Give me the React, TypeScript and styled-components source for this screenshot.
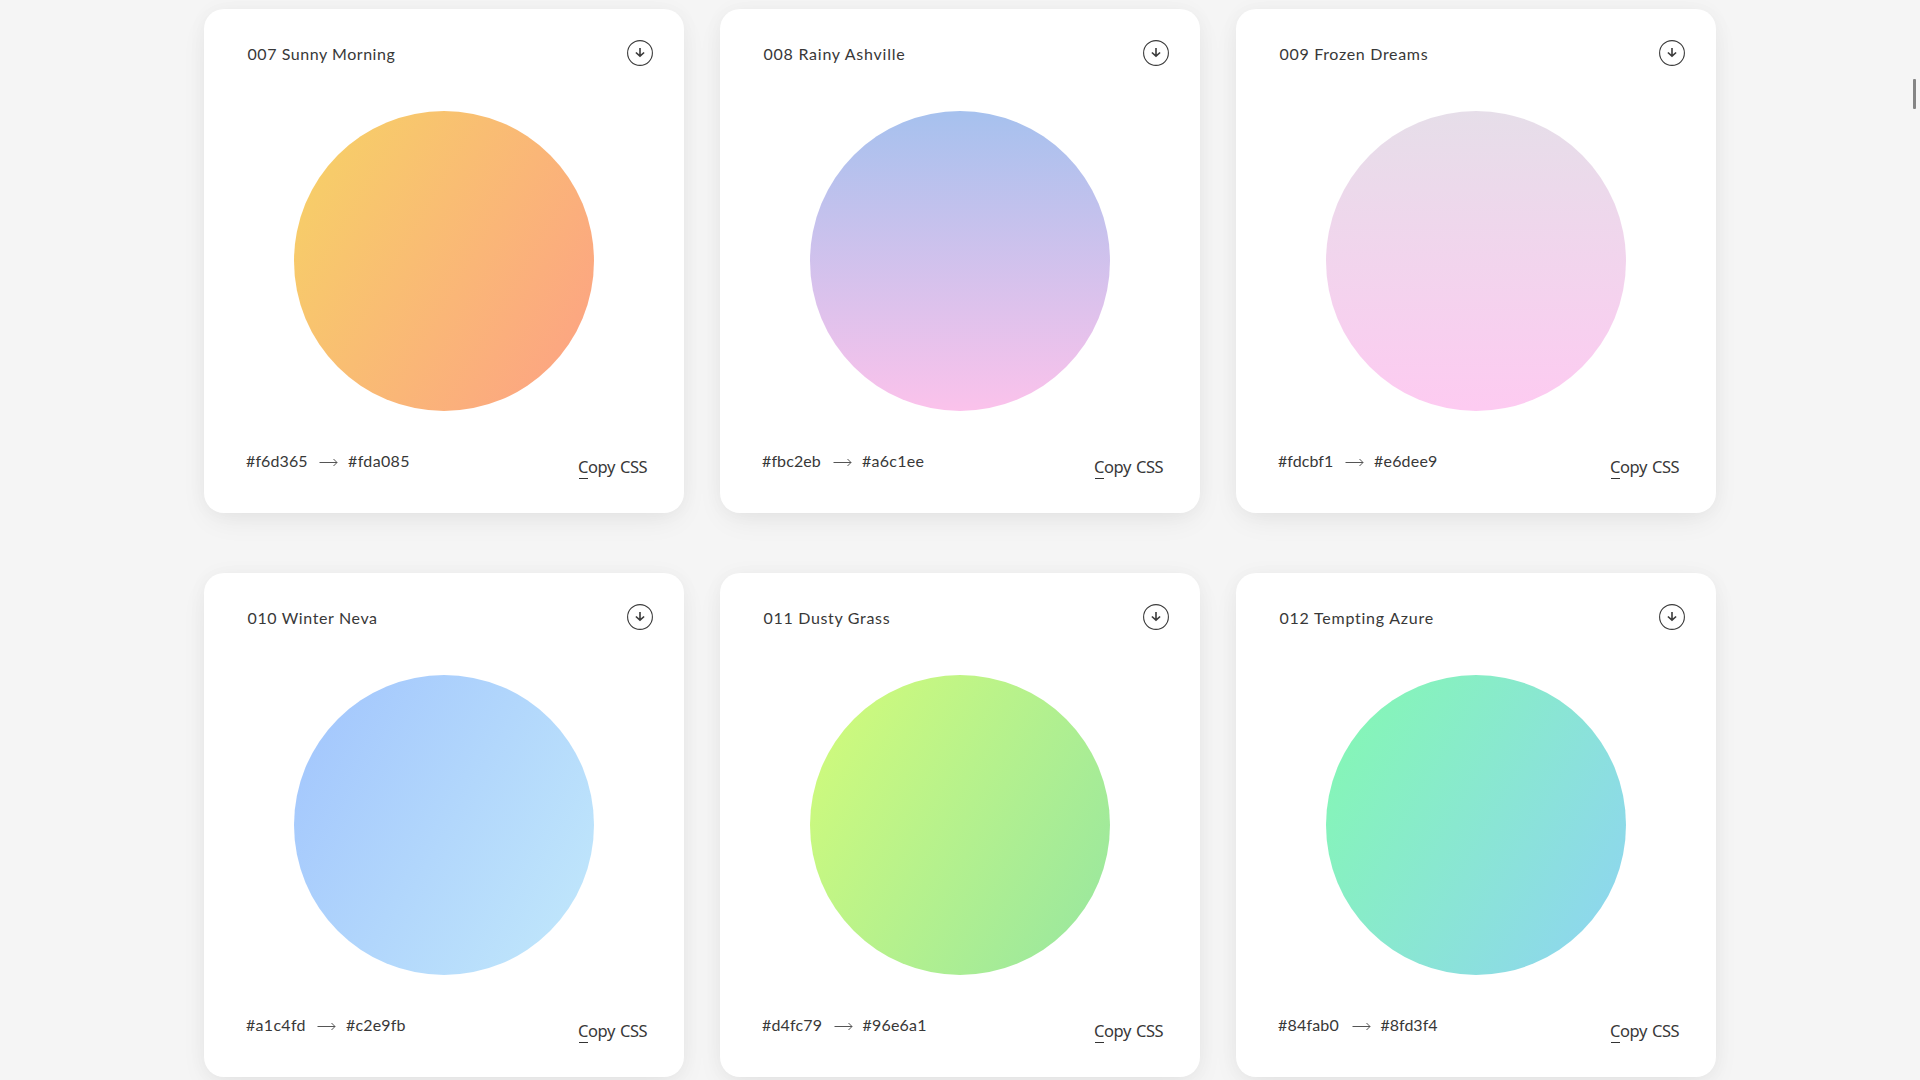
import React from "react";
import styled, { createGlobalStyle } from "styled-components";

const GlobalStyle = createGlobalStyle`
  * { box-sizing: border-box; }
  html, body { margin: 0; height: 1080px; overflow: hidden; background: #f5f5f5; }
`;

const Page = styled.main`
  height: 1080px;
  overflow: hidden;
  padding: 9px 204px 0;
  color: #383838;
  font-family: Lato, "Liberation Sans", sans-serif;
`;

const Grid = styled.div`
  display: grid;
  grid-template-columns: repeat(3, 480px);
  grid-auto-rows: 504px;
  gap: 60px 36px;
`;

const Card = styled.article`
  display: flex;
  flex-direction: column;
  background: #fff;
  border-radius: 20px;
  box-shadow: 0 10px 30px -5px rgba(0, 0, 0, 0.07), 0 0 20px rgba(0, 0, 0, 0.035);
`;

const Header = styled.header`
  display: flex;
  justify-content: space-between;
  height: 102px;
  padding: 31px 31px 0 43.5px;
`;

const Title = styled.h2<{ $spacing: number }>`
  margin: 2px 0 0;
  font-size: 16px;
  font-weight: 400;
  line-height: 24px;
  white-space: nowrap;
  letter-spacing: ${(p) => p.$spacing}px;
`;

const DownloadIcon = styled.svg`
  width: 26px;
  height: 26px;
  fill: none;
  stroke: #3b3b3b;
`;

const Swatch = styled.div<{ $gradient: string }>`
  width: 300px;
  height: 300px;
  margin: 0 auto;
  border-radius: 50%;
  background: ${(p) => p.$gradient};
`;

const Footer = styled.footer`
  display: flex;
  justify-content: space-between;
  padding: 38px 35px 0 42px;
`;

const Colors = styled.div`
  display: flex;
  height: 24px;
`;

const Hex = styled.span<{ $width: number; $spacing: number }>`
  width: ${(p) => p.$width}px;
  font-size: 16px;
  line-height: 24px;
  white-space: nowrap;
  letter-spacing: ${(p) => p.$spacing}px;
`;

const Arrow = styled.svg`
  width: 19px;
  height: 9px;
  margin: 9px 10px 0 11px;
  fill: none;
  stroke: #555;
`;

const CopyButton = styled.button`
  display: flex;
  flex-direction: column;
  align-items: flex-start;
  width: 71px;
  height: 30px;
  margin-top: 6px;
  padding: 0;
  border: 0;
  background: none;
  color: #383838;
  font: 400 16.5px/24px "Noto Sans", sans-serif;
  letter-spacing: -0.45px;
  word-spacing: 1.3px;
  white-space: nowrap;
  &::after {
    content: "";
    width: 9px;
    height: 1px;
    margin: -1px 0 0 1px;
    background: #333;
  }
`;

const ScrollThumb = styled.div`
  position: fixed;
  top: 79px;
  right: 4px;
  width: 3px;
  height: 30px;
  border-radius: 1px;
  background: #858585;
`;

type Gradient = {
  name: string;
  from: string;
  to: string;
  css: string;
  titleSpacing: number;
  fromWidth: number;
  fromSpacing: number;
  toSpacing: number;
};

const gradients: Gradient[] = [
  { name: "007 Sunny Morning", from: "#f6d365", to: "#fda085", css: "linear-gradient(120deg, #f6d365 0%, #fda085 100%)", titleSpacing: 0.55, fromWidth: 62, fromSpacing: 0.1, toSpacing: 0.35 },
  { name: "008 Rainy Ashville", from: "#fbc2eb", to: "#a6c1ee", css: "linear-gradient(to top, #fbc2eb 0%, #a6c1ee 100%)", titleSpacing: 0.75, fromWidth: 60, fromSpacing: 0.1, toSpacing: 0.25 },
  { name: "009 Frozen Dreams", from: "#fdcbf1", to: "#e6dee9", css: "linear-gradient(to top, #fdcbf1 0%, #fdcbf1 1%, #e6dee9 100%)", titleSpacing: 0.68, fromWidth: 56, fromSpacing: 0.05, toSpacing: 0.2 },
  { name: "010 Winter Neva", from: "#a1c4fd", to: "#c2e9fb", css: "linear-gradient(120deg, #a1c4fd 0%, #c2e9fb 100%)", titleSpacing: 0.62, fromWidth: 60, fromSpacing: 0.3, toSpacing: 0.15 },
  { name: "011 Dusty Grass", from: "#d4fc79", to: "#96e6a1", css: "linear-gradient(120deg, #d4fc79 0%, #96e6a1 100%)", titleSpacing: 0.68, fromWidth: 60.5, fromSpacing: 0.15, toSpacing: 0.2 },
  { name: "012 Tempting Azure", from: "#84fab0", to: "#8fd3f4", css: "linear-gradient(120deg, #84fab0 0%, #8fd3f4 100%)", titleSpacing: 0.76, fromWidth: 62.5, fromSpacing: 0.2, toSpacing: 0 },
];

function GradientCard({ item }: { item: Gradient }) {
  return (
    <Card>
      <Header>
        <Title $spacing={item.titleSpacing}>{item.name}</Title>
        <DownloadIcon viewBox="0 0 26 26" aria-hidden="true">
          <circle cx="13" cy="13" r="12.4" strokeWidth="1.1" />
          <path d="M13 8v8.5M8.9 12.5 13 16.2l4.1-3.7" strokeWidth="1.6" />
        </DownloadIcon>
      </Header>
      <Swatch $gradient={item.css} />
      <Footer>
        <Colors>
          <Hex $width={item.fromWidth} $spacing={item.fromSpacing}>{item.from}</Hex>
          <Arrow viewBox="0 0 19 9" aria-hidden="true">
            <path d="M0.5 4.5H18M14.5 1 18 4.5 14.5 8" />
          </Arrow>
          <Hex $width={64} $spacing={item.toSpacing}>{item.to}</Hex>
        </Colors>
        <CopyButton>Copy CSS</CopyButton>
      </Footer>
    </Card>
  );
}

export default function App() {
  return (
    <>
      <GlobalStyle />
      <Page>
        <Grid>
          {gradients.map((item) => (
            <GradientCard key={item.name} item={item} />
          ))}
        </Grid>
      </Page>
      <ScrollThumb />
    </>
  );
}
